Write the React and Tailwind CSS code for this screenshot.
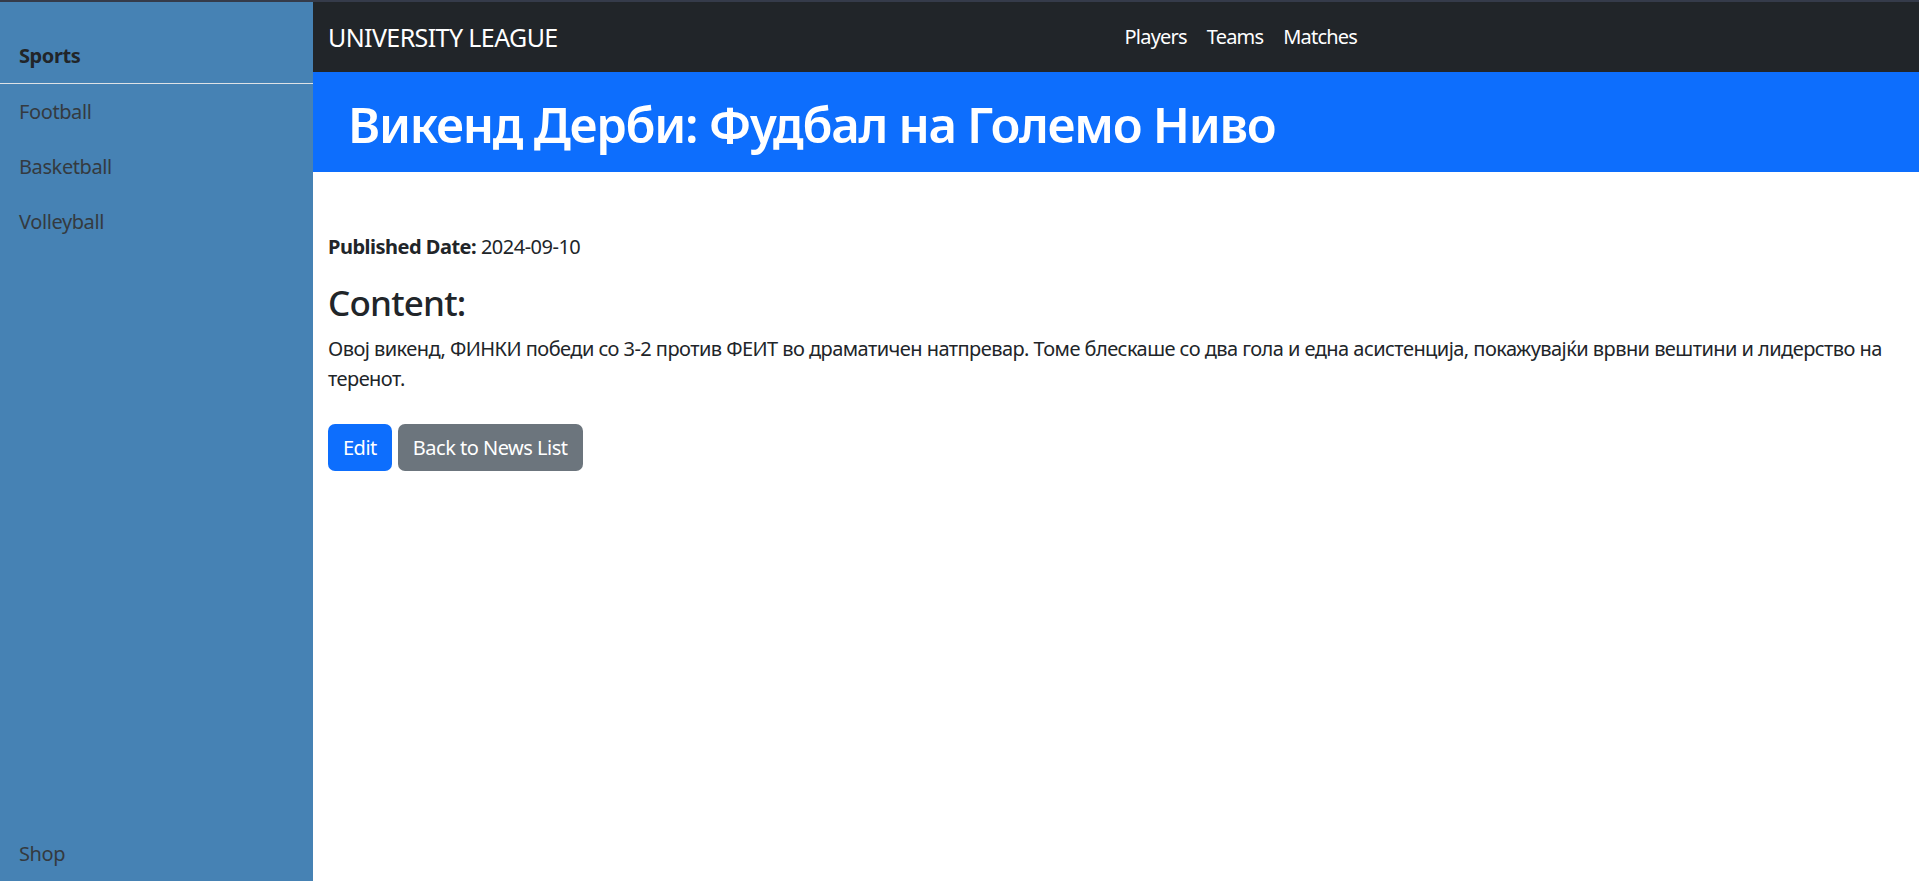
import React from "react";

const font = { fontFamily: '"Segoe UI", "Noto Sans", "Open Sans", sans-serif' };

function SideItem({ children }) {
  return (
    <a href="#" className="block px-[19px] py-[12.5px] text-[20px] leading-[30px] tracking-[-0.4px] text-[#343a40] no-underline">
      {children}
    </a>
  );
}

export default function App() {
  return (
    <div className="flex flex-col min-h-[881px] bg-white" style={font}>
      <div className="h-[2px] bg-[#353b4a]" />
      <div className="flex flex-1">
        <aside className="w-[313px] shrink-0 bg-[#4682b4] flex flex-col pt-[26px]">
          <div className="px-[19px] pt-[12.5px] pb-[12px] text-[20px] leading-[30px] tracking-[-0.4px] font-bold text-[#212529] border-b border-[#dee2e6]">
            Sports
          </div>
          <div className="pt-[1px]">
            <SideItem>Football</SideItem>
            <SideItem>Basketball</SideItem>
            <SideItem>Volleyball</SideItem>
          </div>
          <div className="flex-1" />
          <SideItem>Shop</SideItem>
        </aside>
        <main className="flex-1 flex flex-col">
          <nav className="h-[70px] bg-[#212529] flex items-center px-[15px]">
            <a href="#" className="text-[25px] leading-[37px] tracking-[-0.6px] text-white mr-[20px]">UNIVERSITY LEAGUE</a>
            <ul className="mx-auto flex">
              <li><a href="#" className="block px-[10px] text-[20px] leading-[30px] tracking-[-0.8px] text-white">Players</a></li>
              <li><a href="#" className="block px-[10px] text-[20px] leading-[30px] tracking-[-0.8px] text-white">Teams</a></li>
              <li><a href="#" className="block px-[10px] text-[20px] leading-[30px] tracking-[-0.8px] text-white">Matches</a></li>
            </ul>
          </nav>
          <header className="h-[100px] bg-[#0d6efd] flex items-center px-[35px] pt-[3px]">
            <h1 className="text-[49px] leading-[60px] font-semibold tracking-[-1.3px] text-white">Викенд Дерби: Фудбал на Големо Ниво</h1>
          </header>
          <section className="px-[15px] pt-[60px] text-[20px] leading-[30px] text-[#212529]">
            <p className="mb-[20px] tracking-[-0.5px]"><strong className="font-bold">Published Date:</strong> 2024-09-10</p>
            <h3 className="text-[35px] leading-[42px] font-medium tracking-[-0.8px] mb-[10px]">Content:</h3>
            <p className="mb-[30px] tracking-[-0.55px]">
              Овој викенд, ФИНКИ победи со 3-2 против ФЕИТ во драматичен натпревар. Томе блескаше со два гола и една асистенција, покажувајќи врвни вештини и лидерство на теренот.
            </p>
            <div className="flex gap-[6px]">
              <button className="h-[47px] px-[15px] rounded-[7px] bg-[#0d6efd] text-white text-[20px] tracking-[-0.5px]">Edit</button>
              <button className="h-[47px] px-[15px] rounded-[7px] bg-[#6c757d] text-white text-[20px] tracking-[-0.5px]">Back to News List</button>
            </div>
          </section>
        </main>
      </div>
    </div>
  );
}
